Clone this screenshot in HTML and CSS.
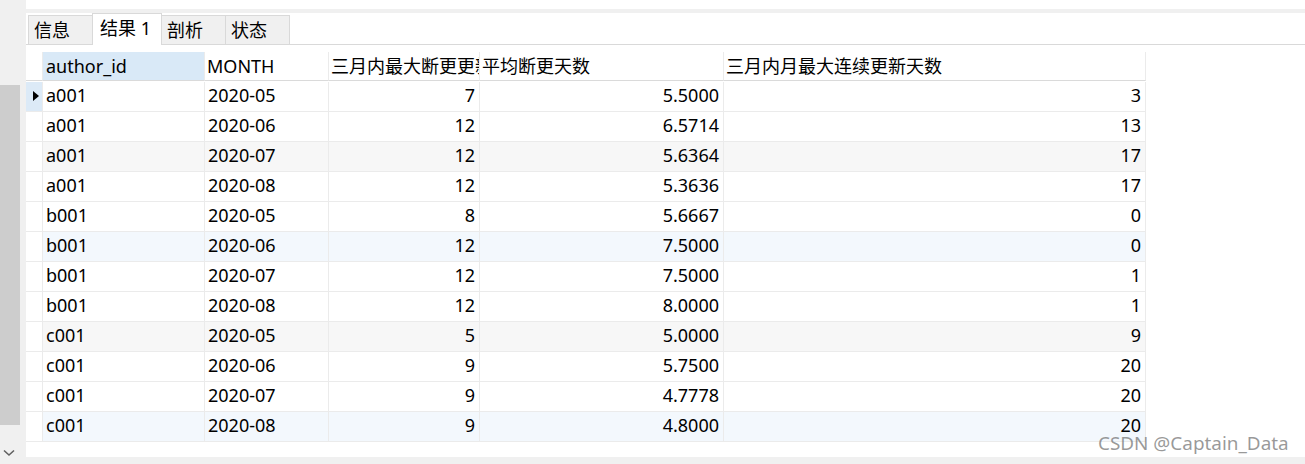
FILE: index.html
```html
<!DOCTYPE html>
<html lang="zh">
<head>
<meta charset="utf-8">
<title>结果 1</title>
<link rel="stylesheet" href="styles.css">
</head>
<body>
<div class="app">
  <div class="vscroll">
    <div class="thumb"></div>
    <div class="spacer"></div>
    <svg class="chev" width="12" height="8" viewBox="0 0 12 8"><path d="M1 1.5 L6 6 L11 1.5" fill="none" stroke="#606060" stroke-width="1.6"/></svg>
  </div>
  <div class="main">
    <div class="topband"></div>
    <div class="tabs">
      <div class="tab">信息</div>
      <div class="tab active">结果 1</div>
      <div class="tab">剖析</div>
      <div class="tab">状态</div>
    </div>
    <div class="gridwrap">
      <div class="grid">
        <div class="c h ind"></div>
        <div class="c h sel">author_id</div>
        <div class="c h">MONTH</div>
        <div class="c h">三月内最大断更更新天数</div>
        <div class="c h">平均断更天数</div>
        <div class="c h">三月内月最大连续更新天数</div>

        <div class="c ind cur"><span class="tri"></span></div><div class="c">a001</div><div class="c">2020-05</div><div class="c n">7</div><div class="c n">5.5000</div><div class="c n">3</div>
        <div class="c ind"></div><div class="c">a001</div><div class="c">2020-06</div><div class="c n">12</div><div class="c n">6.5714</div><div class="c n">13</div>
        <div class="c ind"></div><div class="c g">a001</div><div class="c g">2020-07</div><div class="c n g">12</div><div class="c n g">5.6364</div><div class="c n g">17</div>
        <div class="c ind"></div><div class="c">a001</div><div class="c">2020-08</div><div class="c n">12</div><div class="c n">5.3636</div><div class="c n">17</div>
        <div class="c ind"></div><div class="c">b001</div><div class="c">2020-05</div><div class="c n">8</div><div class="c n">5.6667</div><div class="c n">0</div>
        <div class="c ind"></div><div class="c b">b001</div><div class="c b">2020-06</div><div class="c n b">12</div><div class="c n b">7.5000</div><div class="c n b">0</div>
        <div class="c ind"></div><div class="c">b001</div><div class="c">2020-07</div><div class="c n">12</div><div class="c n">7.5000</div><div class="c n">1</div>
        <div class="c ind"></div><div class="c">b001</div><div class="c">2020-08</div><div class="c n">12</div><div class="c n">8.0000</div><div class="c n">1</div>
        <div class="c ind"></div><div class="c g">c001</div><div class="c g">2020-05</div><div class="c n g">5</div><div class="c n g">5.0000</div><div class="c n g">9</div>
        <div class="c ind"></div><div class="c">c001</div><div class="c">2020-06</div><div class="c n">9</div><div class="c n">5.7500</div><div class="c n">20</div>
        <div class="c ind"></div><div class="c">c001</div><div class="c">2020-07</div><div class="c n">9</div><div class="c n">4.7778</div><div class="c n">20</div>
        <div class="c ind"></div><div class="c b">c001</div><div class="c b">2020-08</div><div class="c n b">9</div><div class="c n b">4.8000</div><div class="c n b">20</div>
      </div>
    </div>
    <div class="hscroll"></div>
    <div class="watermark">CSDN @Captain_Data</div>
  </div>
</div>
</body>
</html>
```

FILE: styles.css
```css
html, body {
  margin: 0;
  padding: 0;
  background: #fff;
}
body {
  font-family: "Noto Sans", "Noto Sans CJK SC", sans-serif;
  font-size: 18px;
  color: #000;
}
.app {
  display: flex;
  width: 1305px;
  height: 464px;
  overflow: hidden;
}
.vscroll {
  width: 26px;
  flex: none;
  background: #f0f0f0;
  display: flex;
  flex-direction: column;
}
.thumb {
  margin-top: 85px;
  width: 20px;
  height: 340px;
  background: #cdcdcd;
}
.spacer { flex: 1; }
.chev {
  margin: 0 0 7px 3px;
}
.main {
  flex: 1;
  display: flex;
  flex-direction: column;
  position: relative;
}
.topband {
  height: 9px;
  border-bottom: 4px solid #f0f0f0;
}
.tabs {
  height: 31px;
  border-bottom: 1px solid #d9d9d9;
  display: flex;
  align-items: flex-end;
  padding-left: 2px;
}
.tab {
  box-sizing: border-box;
  height: 29px;
  width: 65px;
  background: #f0f0f0;
  border: 1px solid #d9d9d9;
  border-bottom: none;
  padding-left: 5px;
  line-height: 28px;
  margin-right: -1px;
}
.tab.active {
  width: 70px;
  background: #fff;
  line-height: 28px;
  padding-left: 7px;
  position: relative;
  margin-bottom: -1px;
  height: 32px;
}
.gridwrap {
  flex: 1;
  padding-top: 7px;
}
.grid {
  display: grid;
  grid-template-columns: 17px 162px 124px 151px 244px 422px;
  grid-auto-rows: 30px;
}
.c {
  box-sizing: border-box;
  border-right: 1px solid #ebebeb;
  border-bottom: 1px solid #ebebeb;
  padding: 0 3px;
  line-height: 26px;
  white-space: nowrap;
  overflow: hidden;
}
.c.h {
  height: 29px;
  line-height: 28px;
  border-bottom-color: #dadada;
  padding-left: 2px;
}
.grid > .h { grid-row: 1; }
.c.h.sel { background: #d9e9f7; padding-left: 3px; }
.c.ind { padding: 0; position: relative; }
.c.ind.cur { background: #dceaf7; }
.c.n { text-align: right; padding-right: 4px; }
.c.g { background: #f7f7f7; }
.c.b { background: #f3f8fd; }
.tri {
  position: absolute;
  left: 7px;
  top: 9px;
  width: 0;
  height: 0;
  border-top: 5px solid transparent;
  border-bottom: 5px solid transparent;
  border-left: 6px solid #000;
}
.hscroll {
  height: 7px;
  background: #f0f0f0;
}
.watermark {
  position: absolute;
  left: 1072px;
  top: 430px;
  font-size: 18.9px;
  color: rgba(120, 120, 120, 0.75);
  white-space: nowrap;
}
```
